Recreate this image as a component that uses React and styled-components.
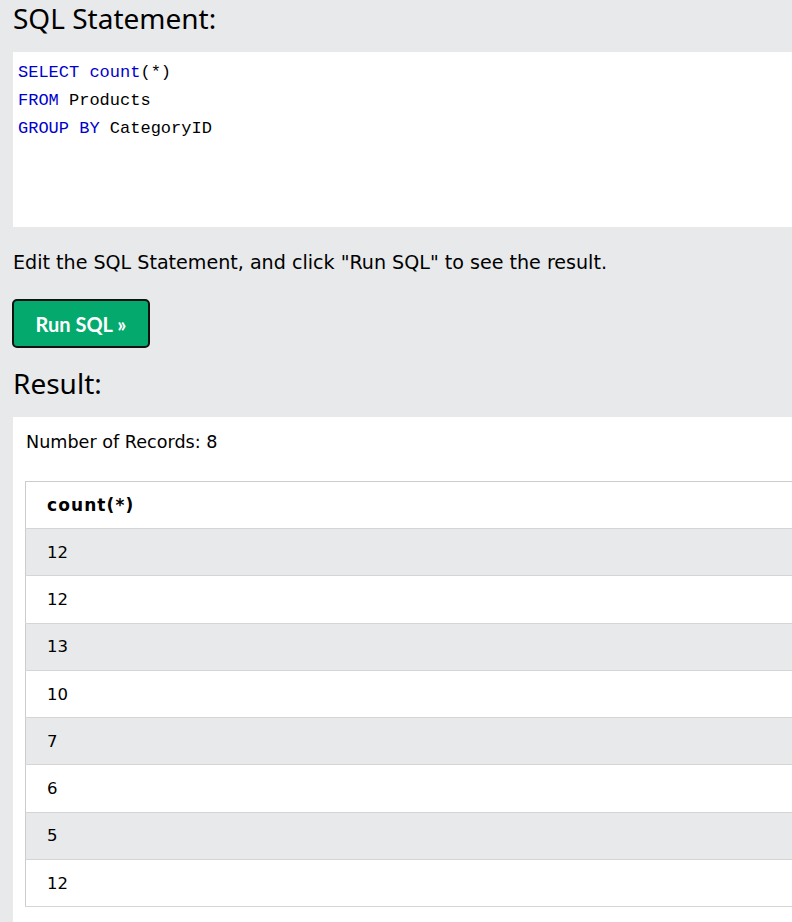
import React from 'react'
import styled, { createGlobalStyle } from 'styled-components'

const GlobalStyle = createGlobalStyle`
  body {
    margin: 0;
    background: #e7e9eb;
    overflow: hidden;
  }
`

const Page = styled.div`
  width: 860px;
  padding: 0 0 0 13px;
  color: #000;
`

const Heading = styled.h2`
  margin: 0;
  font-family: 'Noto Sans', 'Open Sans', sans-serif;
  font-weight: 400;
  font-size: 28px;
  line-height: 36px;
  margin-top: ${(p) => p.$top || 0}px;
`

const CodeBox = styled.div`
  margin-top: 16px;
  height: 175px;
  box-sizing: border-box;
  padding: 7px 5px;
  background: #fff;
  font-family: 'Liberation Mono', 'DejaVu Sans Mono', monospace;
  font-size: 17px;
  line-height: 28px;
  white-space: pre;
`

const Kw = styled.span`
  color: mediumblue;
`

const Hint = styled.p`
  margin: 24px 0 0;
  font-family: 'DejaVu Sans', Verdana, sans-serif;
  font-size: 19.1px;
  line-height: 24px;
`

const RunButton = styled.button`
  display: block;
  margin: 24px 0 0 -1px;
  width: 138px;
  height: 49px;
  border: 2px solid #111;
  border-radius: 5px;
  background: #04aa6d;
  color: #fff;
  font-family: Lato, 'Open Sans', sans-serif;
  font-weight: 700;
  font-size: 20px;
  cursor: pointer;
`

const ResultPanel = styled.div`
  margin-top: 16px;
  background: #fff;
  padding: 13px 0 16px 12px;
  font-family: 'DejaVu Sans', Verdana, sans-serif;
`

const Records = styled.div`
  padding-left: 1px;
  font-size: 17.6px;
  line-height: 24px;
`

const Table = styled.table`
  margin-top: 27px;
  width: 100%;
  border-collapse: collapse;
  border: 1px solid #ccc;
  font-size: 16.5px;
`

const Row = styled.tr`
  background: ${(p) => (p.$shaded ? '#e7e9eb' : '#fff')};
  border-bottom: 1px solid #d5d5d5;
`

const HeadCell = styled.th`
  text-align: left;
  font-weight: 700;
  font-size: 17px;
  letter-spacing: 1.1px;
  height: 46px;
  padding: 0 0 0 21px;
`

const Cell = styled.td`
  height: 46.3px;
  padding: 0 0 0 21px;
`

const counts = [12, 12, 13, 10, 7, 6, 5, 12]

export default function App() {
  return (
    <Page>
      <GlobalStyle />
      <Heading>SQL Statement:</Heading>
      <CodeBox>
        <Kw>SELECT</Kw> <Kw>count</Kw>(*){'\n'}
        <Kw>FROM</Kw> Products{'\n'}
        <Kw>GROUP BY</Kw> CategoryID
      </CodeBox>
      <Hint>Edit the SQL Statement, and click "Run SQL" to see the result.</Hint>
      <RunButton>Run SQL »</RunButton>
      <Heading $top={17}>Result:</Heading>
      <ResultPanel>
        <Records>Number of Records: 8</Records>
        <Table>
          <tbody>
            <Row>
              <HeadCell>count(*)</HeadCell>
            </Row>
            {counts.map((n, i) => (
              <Row key={i} $shaded={i % 2 === 0}>
                <Cell>{n}</Cell>
              </Row>
            ))}
          </tbody>
        </Table>
      </ResultPanel>
    </Page>
  )
}
